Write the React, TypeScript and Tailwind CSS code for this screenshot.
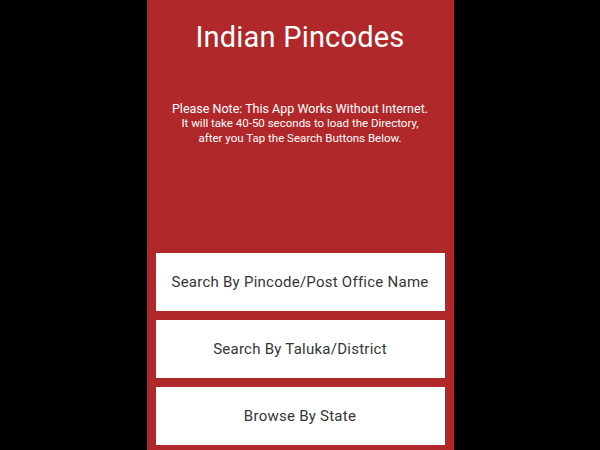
const buttons = [
  "Search By Pincode/Post Office Name",
  "Search By Taluka/District",
  "Browse By State",
];

export default function App() {
  return (
    <div className="flex h-[450px] w-[600px] justify-center bg-black font-['Roboto',sans-serif]">
      <div className="flex w-[307px] flex-col bg-[#b0282a] px-[9px] pb-[5px]">
        <h1 className="mt-[19px] text-center text-[29px] leading-[36px] tracking-[0.2px] text-white">
          Indian Pincodes
        </h1>
        <div className="mt-[46px] text-center text-white">
          <p className="text-[12.5px] leading-[15px]">
            Please Note: This App Works Without Internet.
          </p>
          <p className="text-[11.5px] leading-[15px]">
            It will take 40-50 seconds to load the Directory,
            <br />
            after you Tap the Search Buttons Below.
          </p>
        </div>
        <div className="mt-auto flex flex-col gap-[9px]">
          {buttons.map((label) => (
            <button
              key={label}
              className="flex h-[58px] items-center justify-center bg-white text-[15px] tracking-[0.25px] text-[#363636]"
            >
              {label}
            </button>
          ))}
        </div>
      </div>
    </div>
  );
}
